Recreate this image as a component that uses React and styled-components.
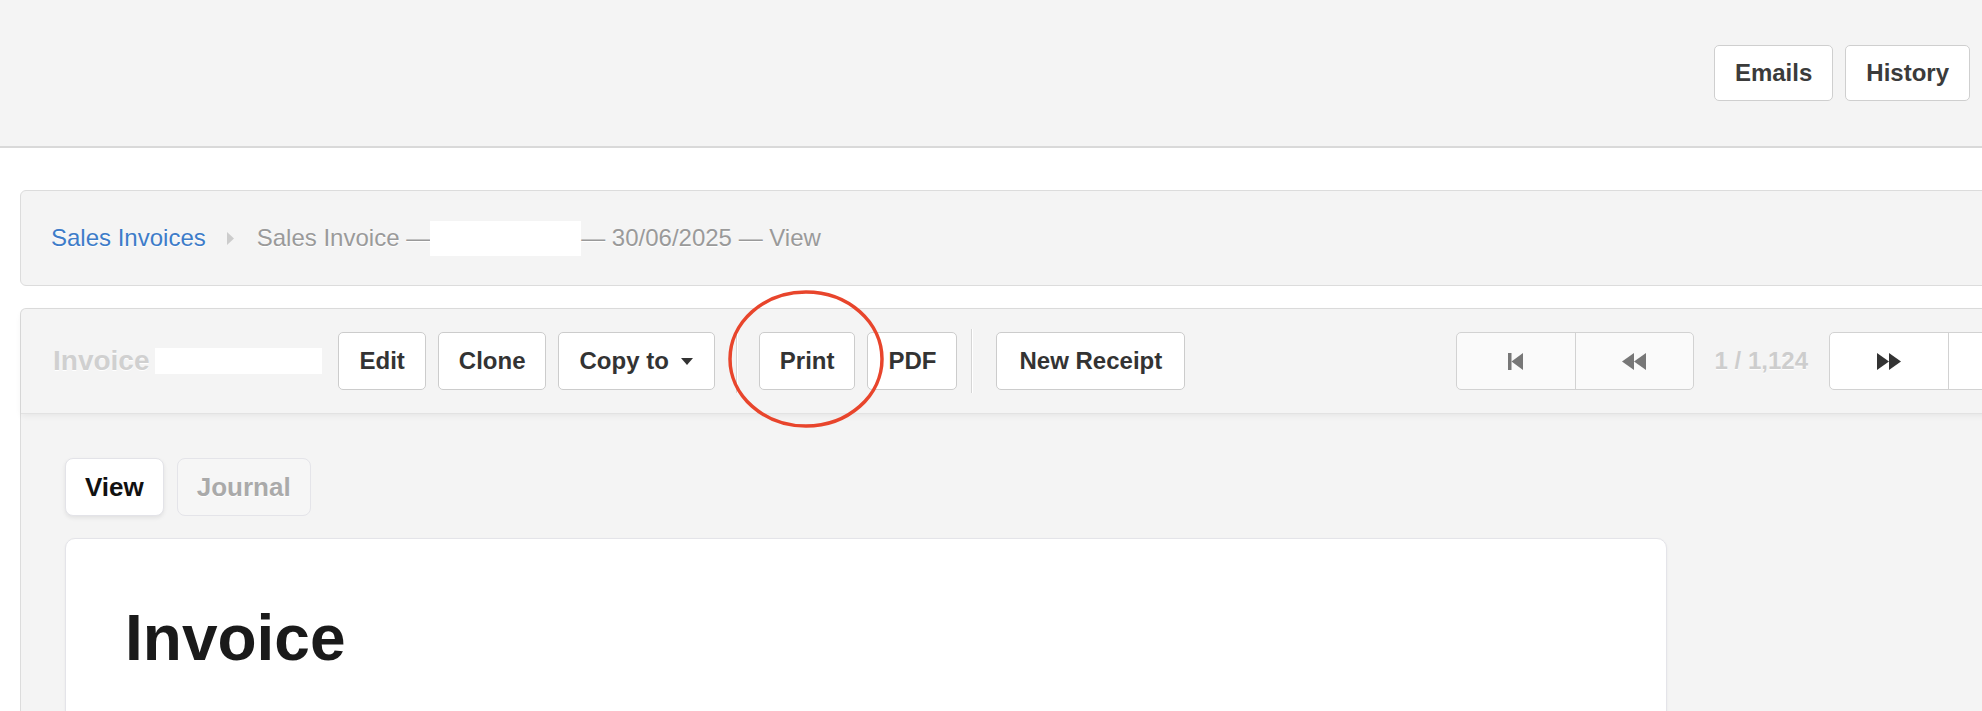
import styled, { createGlobalStyle } from "styled-components";

const GlobalStyle = createGlobalStyle`
  html, body {
    margin: 0;
    background: #fff;
    overflow: hidden;
  }
  body {
    font-family: "Liberation Sans", Arial, sans-serif;
  }
  * {
    box-sizing: border-box;
  }
`;

function StepBackIcon() {
  return (
    <svg width="15" height="17" viewBox="0 0 15 17">
      <rect x="0" y="0" width="3.5" height="17" fill="currentColor" />
      <polygon points="15,0 3.5,8.5 15,17" fill="currentColor" />
    </svg>
  );
}

function BackIcon() {
  return (
    <svg width="24" height="17" viewBox="0 0 24 17">
      <polygon points="0,8.5 12,0 12,17" fill="currentColor" />
      <polygon points="12,8.5 24,0 24,17" fill="currentColor" />
    </svg>
  );
}

function ForwardIcon() {
  return (
    <svg width="24" height="17" viewBox="0 0 24 17">
      <polygon points="0,0 12,8.5 0,17" fill="currentColor" />
      <polygon points="12,0 24,8.5 12,17" fill="currentColor" />
    </svg>
  );
}

function StepForwardIcon() {
  return (
    <svg width="15" height="17" viewBox="0 0 15 17">
      <polygon points="0,0 11.5,8.5 0,17" fill="currentColor" />
      <rect x="11.5" y="0" width="3.5" height="17" fill="currentColor" />
    </svg>
  );
}

function MoreIcon() {
  return (
    <svg width="22" height="6" viewBox="0 0 22 6">
      <circle cx="3" cy="3" r="2.6" fill="currentColor" />
      <circle cx="11" cy="3" r="2.6" fill="currentColor" />
      <circle cx="19" cy="3" r="2.6" fill="currentColor" />
    </svg>
  );
}

export default function App() {
  return (
    <Page>
      <GlobalStyle />
      <TopBar>
        <TopButton>Emails</TopButton>
        <TopButton>History</TopButton>
        <TopButton aria-label="More">
          <MoreIcon />
        </TopButton>
      </TopBar>

      <Content>
        <Breadcrumb>
          <CrumbLink>Sales Invoices</CrumbLink>
          <CrumbArrow width="7" height="13" viewBox="0 0 7 13">
            <polygon points="0,0 7,6.5 0,13" fill="currentColor" />
          </CrumbArrow>
          <span>Sales Invoice —</span>
          <Redacted $w={151} $h={35} />
          <span>— 30/06/2025 — View</span>
        </Breadcrumb>

        <Panel>
          <Toolbar>
            <ToolGroup>
              <TitleWrap>
                <DocLabel>Invoice</DocLabel>
                <Redacted $w={167} $h={26} />
              </TitleWrap>
              <ToolButton>Edit</ToolButton>
              <ToolButton>Clone</ToolButton>
              <ToolButton $padRight={21}>
                Copy to
                <Caret width="12" height="7" viewBox="0 0 12 7">
                  <polygon points="0,0 12,0 6,7" fill="currentColor" />
                </Caret>
              </ToolButton>
              <Separator $ml={9} $mr={10} />
              <ToolButton>Print</ToolButton>
              <ToolButton>PDF</ToolButton>
              <Separator $ml={2} $mr={12} />
              <ToolButton $pad={22} $padRight={22}>
                New Receipt
              </ToolButton>
            </ToolGroup>

            <NavArea>
              <NavGroup $disabled>
                <NavButton $disabled>
                  <StepBackIcon />
                </NavButton>
                <NavButton $disabled>
                  <BackIcon />
                </NavButton>
              </NavGroup>
              <Counter>1 / 1,124</Counter>
              <NavGroup>
                <NavButton>
                  <ForwardIcon />
                </NavButton>
                <NavButton>
                  <StepForwardIcon />
                </NavButton>
              </NavGroup>
            </NavArea>
          </Toolbar>

          <PanelBody>
            <Tabs>
              <Tab $active>View</Tab>
              <Tab>Journal</Tab>
            </Tabs>
            <Card>
              <Heading>Invoice</Heading>
            </Card>
          </PanelBody>
        </Panel>
      </Content>

      <Annotation width="158" height="140" viewBox="0 0 158 140">
        <ellipse
          cx="79"
          cy="70"
          rx="76"
          ry="67"
          fill="none"
          stroke="#e8452c"
          strokeWidth="3.5"
        />
      </Annotation>
    </Page>
  );
}

const Page = styled.div`
  position: relative;
  width: 2119px;
  height: 711px;
`;

const TopBar = styled.header`
  height: 148px;
  background: #f4f4f4;
  border-bottom: 2px solid #d9d9d9;
  display: flex;
  align-items: center;
  justify-content: flex-end;
  gap: 12px;
  padding: 0 24px 0 20px;
`;

const TopButton = styled.button`
  height: 56px;
  min-width: 113px;
  padding: 0 20px;
  display: inline-flex;
  align-items: center;
  justify-content: center;
  background: #fff;
  border: 1px solid #cfcfcf;
  border-radius: 5px;
  font-family: inherit;
  font-weight: 700;
  font-size: 24px;
  color: #3b3b3b;
`;

const Content = styled.main`
  padding: 42px 20px 0;
`;

const Breadcrumb = styled.nav`
  height: 96px;
  display: flex;
  align-items: center;
  padding-left: 30px;
  background: #f4f4f4;
  border: 1px solid #dcdcdc;
  border-radius: 6px;
  font-size: 24px;
  color: #9a9a9a;
  text-shadow: 0 1px 0 #fff;
`;

const CrumbLink = styled.a`
  color: #3d7cc9;
  margin-right: 21px;
`;

const CrumbArrow = styled.svg`
  color: #cccccc;
  margin-right: 23px;
`;

const Redacted = styled.div`
  width: ${(p) => p.$w}px;
  height: ${(p) => p.$h}px;
  background: #fff;
`;

const Panel = styled.section`
  margin-top: 22px;
  height: 420px;
  background: #f4f4f4;
  border: 1px solid #dcdcdc;
  border-bottom: none;
  border-radius: 6px 6px 0 0;
`;

const Toolbar = styled.div`
  position: relative;
  height: 104px;
  display: flex;
  align-items: center;
  justify-content: space-between;
  padding: 0 31px 0 32px;
  background: #f4f4f4;
  border-radius: 6px 6px 0 0;
  box-shadow: 0 1px 0 #e2e2e2, 0 3px 6px rgba(0, 0, 0, 0.06);
`;

const ToolGroup = styled.div`
  display: flex;
  align-items: center;
  gap: 12px;
`;

const TitleWrap = styled.div`
  display: flex;
  align-items: center;
  gap: 6px;
  margin-right: 4px;
`;

const DocLabel = styled.span`
  font-weight: 700;
  font-size: 28px;
  color: #d0d0d0;
  text-shadow: 0 1px 0 #fff;
`;

const ToolButton = styled.button`
  height: 58px;
  padding: 0 ${(p) => p.$padRight || 20}px 0 ${(p) => p.$pad || 20}px;
  display: inline-flex;
  align-items: center;
  background: #fff;
  border: 1px solid #cccccc;
  border-radius: 5px;
  font-family: inherit;
  font-weight: 700;
  font-size: 24px;
  color: #333;
`;

const Caret = styled.svg`
  margin-left: 12px;
  color: #333;
`;

const Separator = styled.div`
  width: 1px;
  height: 64px;
  background: #d6d6d6;
  box-shadow: 1px 0 0 #fff;
  margin: 0 ${(p) => p.$mr}px 0 ${(p) => p.$ml}px;
`;

const NavArea = styled.div`
  display: flex;
  align-items: center;
  gap: 21px;
`;

const NavGroup = styled.div`
  display: flex;
  height: 58px;
  background: ${(p) => (p.$disabled ? "#fafafa" : "#fff")};
  border: 1px solid #d2d2d2;
  border-radius: 5px;
  overflow: hidden;
`;

const NavButton = styled.div`
  width: 118px;
  display: flex;
  align-items: center;
  justify-content: center;
  color: ${(p) => (p.$disabled ? "#777" : "#333")};

  & + & {
    border-left: 1px solid #d2d2d2;
  }
`;

const Counter = styled.span`
  font-weight: 700;
  font-size: 24px;
  color: #cdcdcd;
  text-shadow: 0 1px 0 #fff;
`;

const PanelBody = styled.div`
  padding: 45px 0 0 44px;
`;

const Tabs = styled.div`
  display: flex;
  gap: 13px;
  margin-bottom: 22px;
`;

const Tab = styled.div`
  height: 58px;
  padding: 0 19px;
  display: flex;
  align-items: center;
  border-radius: 8px;
  font-weight: 700;
  font-size: 26px;
  background: ${(p) => (p.$active ? "#fff" : "#f6f6f6")};
  color: ${(p) => (p.$active ? "#111" : "#aaaaaa")};
  border: 1px solid ${(p) => (p.$active ? "#e3e3e8" : "#e4e4e9")};
  box-shadow: ${(p) => (p.$active ? "0 2px 4px rgba(0, 0, 0, 0.08)" : "none")};
  text-shadow: ${(p) => (p.$active ? "none" : "0 1px 0 #fff")};
`;

const Card = styled.div`
  width: 1602px;
  height: 300px;
  padding: 62px 59px;
  background: #fff;
  border: 1px solid #e4e4e9;
  border-radius: 10px;
  box-shadow: 0 1px 3px rgba(0, 0, 0, 0.05);
`;

const Heading = styled.h1`
  margin: 0;
  font-weight: 700;
  font-size: 64px;
  line-height: normal;
  color: #1a1a1a;
`;

const Annotation = styled.svg`
  position: absolute;
  left: 727px;
  top: 289px;
  pointer-events: none;
`;
